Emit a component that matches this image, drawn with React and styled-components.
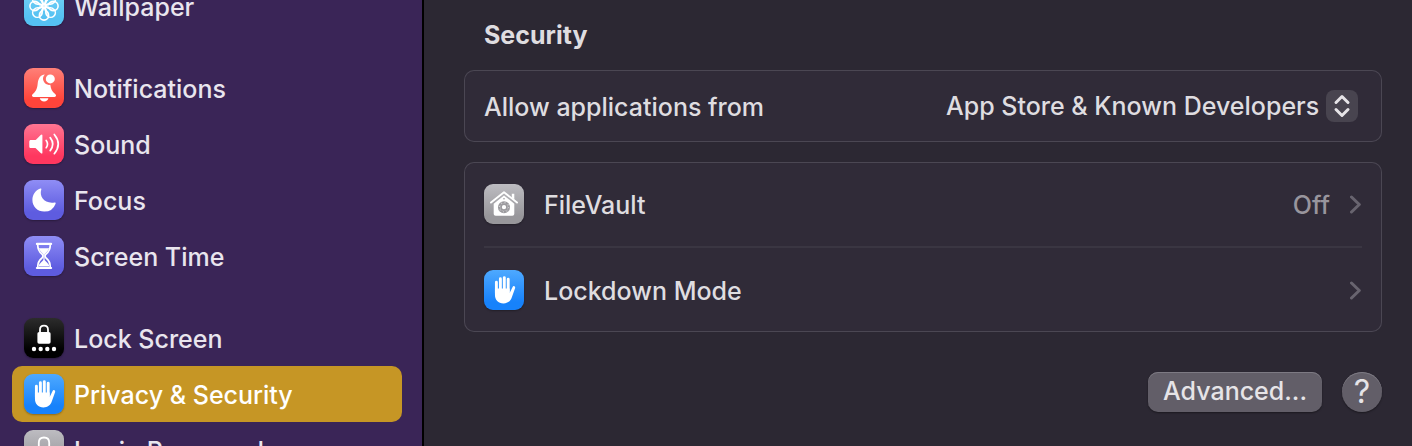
import React from "react"
import styled, { createGlobalStyle } from "styled-components"

// ------------------------------
// Global styling
// ------------------------------
const GlobalStyle = createGlobalStyle`
  *, *::before, *::after {
    box-sizing: border-box;
  }
  body {
    margin: 0;
    background: #2c2833;
    color: #dfdde0;
    font-family: Inter, "Liberation Sans", sans-serif;
    font-size: 25px;
    font-weight: 450;
    line-height: 32px;
  }
  button, select {
    font: inherit;
    color: inherit;
  }
`

// ------------------------------
// Icon drawings, all on a 40 x 40 tile
// ------------------------------
const PETALS = [0, 45, 90, 135, 180, 225, 270, 315]

const FlowerGlyph = () => (
  <g fill="none" stroke="#fff" strokeWidth="1.6">
    {PETALS.map((angle) => (
      <path
        key={angle}
        transform={`rotate(${angle} 20 20)`}
        d="M18.600 20v-4.500C16.500 14.500 15.400 12.500 15.400 10.500a4.600 4.600 0 0 1 9.200 0C24.600 12.500 23.500 14.500 21.400 15.500V20"
      />
    ))}
  </g>
)

const BellGlyph = () => (
  <g fill="#fff">
    <path d="M20.800 6.400a6.200 6.200 0 0 0 5.500 10.400c.5 4.200 1.700 6.700 4.600 9 .8.700 1.100 1.200 1.100 1.800 0 .8-.6 1.300-1.500 1.300h-21C8.600 28.900 8 28.400 8 27.600c0-.6.300-1.100 1.100-1.800 3.300-2.700 4.100-5.600 4.600-10.200.5-5.600 3-8.900 7.100-9.200Z" />
    <path d="M15.800 30.300h8.600c-.3 1.900-2 3.200-4.300 3.200s-4-1.300-4.300-3.200Z" />
    <circle cx="26.300" cy="10.900" r="4.500" />
  </g>
)

const SpeakerGlyph = () => (
  <>
    <path
      fill="#fff"
      d="M7 16.100h3.900c.4 0 .8-.1 1.100-.4l4.700-4.600c.8-.8 1.700-.9 1.700.3v17.300c0 1.100-.9 1.100-1.700.3L12 24.500c-.3-.3-.7-.4-1.100-.4H7c-1.100 0-1.700-.6-1.700-1.700v-4.600c0-1.100.6-1.700 1.700-1.700Z"
    />
    <path
      fill="none"
      stroke="#fff"
      strokeWidth="1.700"
      strokeLinecap="round"
      d="M22.200 16.500c1.700 2.300 1.700 4.900 0 7.200M26.200 13.600c3.300 4.200 3.300 8.800 0 13M30.300 10.500c5 6.100 5 13.100 0 19.200"
    />
  </>
)

const MoonGlyph = () => (
  <path
    fill="#fff"
    d="M16.300 8.600c.7-.3 1.300.3 1 1-2.400 7.400 3.500 14.500 13.200 12.900.9-.1 1.400.4 1.100 1.200A12.100 12.100 0 0 1 20.300 31.600C13.500 31.600 8.400 26.600 8.400 20c0-5.200 3-9.600 7.900-11.400Z"
  />
)

const HourglassGlyph = () => (
  <>
    <path
      fill="none"
      stroke="#fff"
      strokeWidth="1.700"
      d="M13.700 8.500c0 5 1.200 7.200 4.200 9.500 1.300 1.100 1.300 2.900 0 4-3 2.300-4.200 4.500-4.200 9.500M26.300 8.500c0 5-1.200 7.200-4.200 9.500-1.300 1.100-1.300 2.900 0 4 3 2.300 4.200 4.500 4.200 9.500"
    />
    <path
      fill="none"
      stroke="#fff"
      strokeWidth="2.200"
      strokeLinecap="round"
      d="M12.900 7.900h14.200M12.900 32h14.200"
    />
    <path fill="#fff" d="M14.900 12.300h10.200c-.7 2.300-2.100 3.600-3.700 4.900-.9.800-.8 1.800-.8 3v3.600c0 1.300 4.200 3.300 4.900 6.600h-11c.7-3.300 4.900-5.300 4.900-6.600v-3.600c0-1.200.1-2.200-.8-3-1.600-1.300-3-2.600-3.700-4.900Z" />
  </>
)

const LockScreenGlyph = () => (
  <g fill="#fff">
    <path
      fill="none"
      stroke="#fff"
      strokeWidth="1.800"
      d="M16 15v-3.200c0-2.500 1.700-4.200 4-4.200s4 1.700 4 4.200V15"
    />
    <rect x="13.400" y="14" width="13.200" height="11.700" rx="1.700" />
    <circle cx="10" cy="31" r="2.200" />
    <circle cx="16.700" cy="31" r="2.200" />
    <circle cx="23.300" cy="31" r="2.200" />
    <circle cx="30" cy="31" r="2.200" />
  </g>
)

const HandGlyph = () => (
  <>
    <path
      fill="none"
      stroke="#fff"
      strokeWidth="2.900"
      strokeLinecap="round"
      d="M12.400 12.300V23M16.400 8.800V22M20.300 7.600V22M24.200 9.300V22"
    />
    <path
      fill="#fff"
      d="M10.950 18.600h14.700v4.300l2.700-5.500c.5-1.100 1.200-1.500 2-1.200.8.300 1 1 .7 2l-3.200 9c-1.400 4-4.200 6.200-8.400 6.200-5.300 0-8.500-3.300-8.500-8.600Z"
    />
  </>
)

const VaultGlyph = () => (
  <>
    <path
      fill="none"
      stroke="#fff"
      strokeWidth="1.900"
      strokeLinecap="round"
      strokeLinejoin="round"
      d="M7 18.600 20 8.200l13 10.400"
    />
    <path fill="#fff" d="M27.800 9.700h2.500v5.700l-2.500-2ZM20 11.400l10.300 8.300v10c0 1.300-.8 2-2 2H11.700c-1.200 0-2-.7-2-2v-10Z" />
    <circle cx="20" cy="23.200" r="4.900" fill="none" stroke="#9b9a9e" strokeWidth="2.300" />
    <circle cx="20" cy="23.200" r="4.700" fill="none" stroke="#d8d8da" strokeWidth="1.200" strokeDasharray="1 2.690" />
    <circle cx="20" cy="23.200" r="3" fill="none" stroke="#9b9a9e" strokeWidth="1.700" />
    <circle cx="20" cy="14.800" r=".8" fill="#9b9a9e" />
  </>
)

const PadlockGlyph = () => (
  <>
    <path
      fill="none"
      stroke="#fff"
      strokeWidth="1.800"
      d="M14.800 18v-5.200c0-3.300 2.100-5.300 5.200-5.300s5.200 2 5.200 5.300V18"
    />
    <rect x="11.500" y="17" width="17" height="14" rx="2.500" fill="#fff" />
  </>
)

const TILES = {
  wallpaper: { from: "#7ad4f6", to: "#55c1f2", Glyph: FlowerGlyph },
  notifications: { from: "#ff8078", to: "#ff443a", Glyph: BellGlyph },
  sound: { from: "#ff7592", to: "#ff375f", Glyph: SpeakerGlyph },
  focus: { from: "#8f8df5", to: "#5e5ce0", Glyph: MoonGlyph },
  screenTime: { from: "#8f8df5", to: "#5e5ce0", Glyph: HourglassGlyph },
  lockScreen: { from: "#2c2c2c", to: "#000000", Glyph: LockScreenGlyph },
  privacy: { from: "#4ea9ff", to: "#1782fb", Glyph: HandGlyph },
  password: { from: "#bdbcc1", to: "#98979b", Glyph: PadlockGlyph },
  vault: { from: "#bdbcc1", to: "#98979b", Glyph: VaultGlyph },
}

function TileIcon({ name }) {
  const { from, to, Glyph } = TILES[name]
  return (
    <Tile $from={from} $to={to}>
      <svg width="40" height="40" viewBox="0 0 40 40" aria-hidden="true">
        <Glyph />
      </svg>
    </Tile>
  )
}

function Chevron() {
  return (
    <ChevronSVG width="12" height="20" viewBox="0 0 12 20" aria-hidden="true">
      <path d="m1.500 3 7.800 7.500L1.500 18" />
    </ChevronSVG>
  )
}

// ------------------------------
// The settings window
// ------------------------------
const GROUPS = [
  [{ label: "Wallpaper", icon: "wallpaper" }],
  [
    { label: "Notifications", icon: "notifications" },
    { label: "Sound", icon: "sound" },
    { label: "Focus", icon: "focus" },
    { label: "Screen Time", icon: "screenTime" },
  ],
  [
    { label: "Lock Screen", icon: "lockScreen" },
    { label: "Privacy & Security", icon: "privacy", selected: true },
    { label: "Login Password", icon: "password" },
  ],
]

export default function App() {
  return (
    <Window>
      <GlobalStyle />
      <Sidebar>
        <Groups>
          {GROUPS.map((items) => (
            <div key={items[0].label}>
              {items.map(({ label, icon, selected }) => (
                <SidebarLink
                  key={label}
                  href={`#${icon}`}
                  $selected={selected}
                  aria-current={selected ? "page" : undefined}
                >
                  <TileIcon name={icon} />
                  <Label>{label}</Label>
                </SidebarLink>
              ))}
            </div>
          ))}
        </Groups>
      </Sidebar>

      <Main>
        <Heading>Security</Heading>

        <Card>
          <SelectRow>
            <Label as="label" htmlFor="sources">Allow applications from</Label>
            <SelectWrapper>
              <Select id="sources" defaultValue="known">
                <option value="known">App Store &amp; Known Developers</option>
                <option value="store">App Store</option>
              </Select>
              <Stepper>
                <svg width="32" height="32" viewBox="0 0 32 32" aria-hidden="true">
                  <path d="m10 12.500 6-6 6 6M10 19.500l6 6 6-6" />
                </svg>
              </Stepper>
            </SelectWrapper>
          </SelectRow>
        </Card>

        <Card>
          <RowButton type="button">
            <TileIcon name="vault" />
            <RowLabel>FileVault</RowLabel>
            <RowValue>Off</RowValue>
            <Chevron />
          </RowButton>
          <Divider />
          <RowButton type="button">
            <TileIcon name="privacy" />
            <RowLabel>Lockdown Mode</RowLabel>
            <Chevron />
          </RowButton>
        </Card>

        <Actions>
          <PushButton type="button">Advanced...</PushButton>
          <HelpButton type="button" aria-label="Help">?</HelpButton>
        </Actions>
      </Main>
    </Window>
  )
}

// ------------------------------
// Layout
// ------------------------------
const Window = styled.div`
  display: flex;
  height: 100vh;
  overflow: hidden;
`

const Sidebar = styled.nav`
  flex: none;
  width: 424px;
  padding: 0 20px 0 12px;
  overflow: hidden;
  background: #3a2557;
  border-right: 2px solid #000;
`

// The list is scrolled part way through its first row
const Groups = styled.div`
  display: flex;
  flex-direction: column;
  gap: 26px;
  margin-top: -22px;
`

const Main = styled.main`
  flex: 1;
  display: flex;
  flex-direction: column;
  gap: 20px;
  min-width: 0;
  padding: 18px 30px 0 40px;
`

// ------------------------------
// Sidebar parts
// ------------------------------
const Tile = styled.span`
  flex: none;
  width: 40px;
  height: 40px;
  border-radius: 9px;
  background: linear-gradient(${(p) => p.$from}, ${(p) => p.$to} 80%);
  box-shadow: 0 1px 2px rgba(0, 0, 0, .3);
  svg {
    display: block;
  }
`

// Row texts sit slightly below the middle of their icon
const Label = styled.span`
  padding-top: 2px;
`

const SidebarLink = styled.a`
  display: flex;
  align-items: center;
  gap: 10px;
  height: 56px;
  padding: 0 12px;
  border-radius: 10px;
  color: ${(p) => (p.$selected ? "#fff" : "#e9e5ee")};
  background: ${(p) => (p.$selected ? "#c69625" : "transparent")};
  text-decoration: none;
  white-space: nowrap;
`

// ------------------------------
// Main parts
// ------------------------------
const Heading = styled.h2`
  margin: 0;
  padding: 2px 0 0 20px;
  font-size: 25px;
  font-weight: 700;
  line-height: 30px;
`

const Card = styled.section`
  padding: 0 20px;
  border-radius: 10px;
  background: #302b38;
  box-shadow: inset 0 0 0 1px #4b4753;
`

const SelectRow = styled.div`
  display: flex;
  align-items: center;
  justify-content: space-between;
  height: 72px;
  padding-right: 4px;
`

const SelectWrapper = styled.div`
  position: relative;
`

const Select = styled.select`
  display: block;
  height: 32px;
  padding: 0 38px 0 0;
  border: none;
  background: transparent;
  appearance: none;
`

const Stepper = styled.span`
  position: absolute;
  top: 0;
  right: 0;
  width: 32px;
  height: 32px;
  border-radius: 8px;
  background: #48444f;
  pointer-events: none;
  svg {
    display: block;
    fill: none;
    stroke: #e6e4e7;
    stroke-width: 3;
    stroke-linecap: round;
    stroke-linejoin: round;
  }
`

const RowButton = styled.button`
  display: flex;
  align-items: center;
  width: 100%;
  height: 84px;
  padding: 0;
  border: none;
  background: transparent;
  text-align: left;
`

const RowLabel = styled(Label)`
  flex: 1;
  padding-left: 20px;
`

const RowValue = styled(Label)`
  padding-right: 20px;
  color: #98959d;
`

const ChevronSVG = styled.svg`
  flex: none;
  fill: none;
  stroke: #68646f;
  stroke-width: 3;
  stroke-linecap: round;
  stroke-linejoin: round;
`

const Divider = styled.hr`
  height: 2px;
  margin: 0;
  border: none;
  background: #3a3642;
`

const Actions = styled.div`
  display: flex;
  justify-content: flex-end;
  gap: 20px;
  padding-top: 20px;
`

const PushButton = styled.button`
  height: 40px;
  padding: 0 15px 2px;
  border: none;
  border-radius: 10px;
  background: #625e68;
  box-shadow: inset 0 1px 0 #7d7a83, 0 1px 2px rgba(0, 0, 0, .4);
  color: #e6e4e7;
`

const HelpButton = styled(PushButton)`
  width: 40px;
  padding: 0;
  border-radius: 50%;
  font-size: 32px;
  font-weight: 400;
`
